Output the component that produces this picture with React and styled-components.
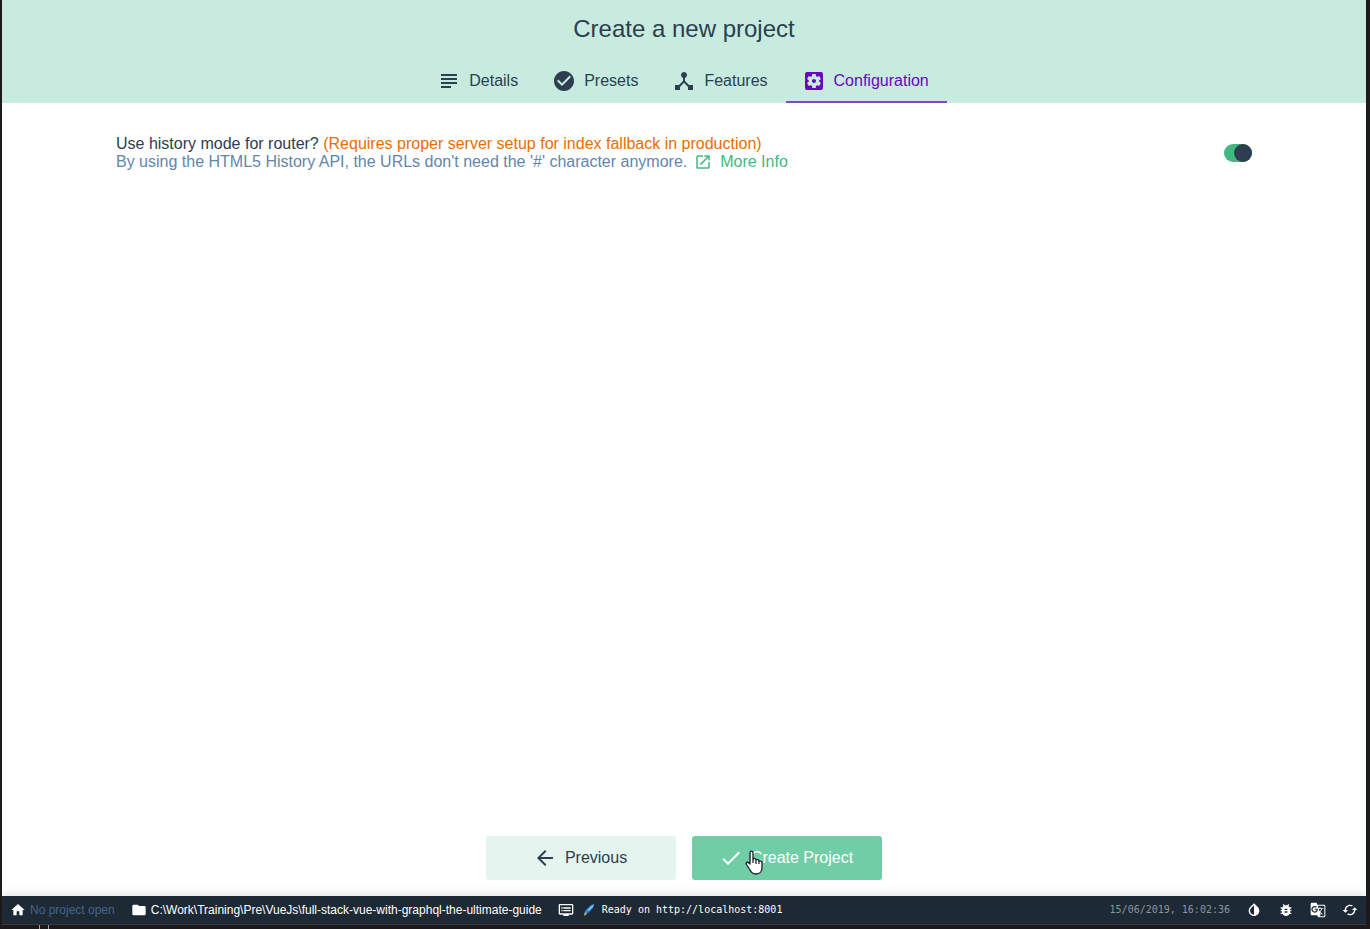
import React from "react";
import styled, { createGlobalStyle } from "styled-components";
import {
  MdSubject, MdCheckCircle, MdDeviceHub, MdSettingsApplications, MdOpenInNew,
  MdArrowBack, MdCheck, MdHome, MdFolder, MdDvr, MdInvertColors, MdBugReport,
  MdGTranslate, MdCached,
} from "react-icons/md";

const Global = createGlobalStyle`
  * { box-sizing: border-box; }
  html, body, #root { height: 100%; }
  body {
    margin: 0;
    background: #1c1a1b;
    color: #2c3e50;
    font: 16px/18px "Liberation Sans", Arial, sans-serif;
  }
  button { font: inherit; border: 0; margin: 0; cursor: pointer; }
`;

const Desktop = styled.div`
  height: 100%;
  display: flex;
  flex-direction: column;
  padding: 0 4px 0 2px;
`;

const Window = styled.div`
  flex: 1;
  min-height: 0;
  display: flex;
  flex-direction: column;
  background: #fff;
`;

const Header = styled.header`
  background: #c7ebde;
  text-align: center;
`;

const Title = styled.h1`
  margin: 0;
  padding-top: 15px;
  font-size: 24px;
  line-height: 28px;
  font-weight: 400;
`;

const Tabs = styled.nav`
  display: flex;
  justify-content: center;
  padding-top: 16px;
`;

const Tab = styled.button`
  display: flex;
  align-items: center;
  gap: 8px;
  height: 44px;
  padding: 2px 18px 0 16px;
  background: none;
  border-bottom: 2px solid ${(p) => (p.$active ? "#8049c4" : "transparent")};
  color: ${(p) => (p.$active ? "#6806c1" : "#2c3e50")};
  svg { width: 24px; height: 24px; }
`;

const Content = styled.main`
  flex: 1;
  padding: 32px 114px;
`;

const Prompt = styled.div`
  display: flex;
  align-items: center;
  justify-content: space-between;
`;

const PromptText = styled.label`
  display: block;
`;

const Warning = styled.span`
  color: #ea6e00;
`;

const Description = styled.div`
  display: flex;
  align-items: center;
  color: #6286ad;
`;

const MoreLink = styled.a`
  display: inline-flex;
  align-items: center;
  gap: 8px;
  margin-left: 7px;
  color: #42b983;
  text-decoration: none;
  svg { width: 18px; height: 18px; }
`;

const Switch = styled.input`
  appearance: none;
  width: 28px;
  height: 18px;
  margin: 0;
  border-radius: 9px;
  background: #42b983;
  display: flex;
  justify-content: flex-end;
  cursor: pointer;
  &::before {
    content: "";
    width: 18px;
    height: 18px;
    border-radius: 50%;
    background: #2c3e50;
  }
  &:not(:checked) { justify-content: flex-start; background: #b9c6d2; }
`;

const Actions = styled.div`
  display: flex;
  justify-content: center;
  gap: 16px;
  padding: 16px;
`;

const Action = styled.button`
  position: relative;
  display: flex;
  align-items: center;
  justify-content: center;
  gap: 8px;
  width: 190px;
  height: 44px;
  padding: 0 8px 0 6px;
  border-radius: 3px;
  background: ${(p) => (p.$primary ? "#71cda5" : "#e3f5ee")};
  color: ${(p) => (p.$primary ? "#fff" : "#2c3e50")};
  svg { width: 24px; height: 24px; }
`;

const Pointer = styled.svg`
  && {
    position: absolute;
    left: 53px;
    top: 14px;
    width: 18px;
    height: 25px;
  }
`;

const StatusBar = styled.footer`
  display: flex;
  align-items: center;
  height: 28px;
  padding: 0 8px;
  background: #1d2935;
  color: #fff;
  font-size: 12px;
  line-height: 16px;
  box-shadow: 0 -2px 10px rgba(0, 0, 0, 0.12);
`;

const StatusItem = styled.div`
  display: flex;
  align-items: center;
  gap: 4px;
  margin-right: 16px;
  white-space: nowrap;
  color: ${(p) => (p.$muted ? "#44658b" : "#fff")};
  svg { width: 16px; height: 16px; color: #fff; }
`;

const Log = styled(StatusItem)`
  flex: 1;
  gap: 6px;
  font: 10px/16px "DejaVu Sans Mono", monospace;
`;

const Clock = styled.time`
  color: #8e9499;
  font: 10px/16px "DejaVu Sans Mono", monospace;
`;

const StatusButton = styled.button`
  display: flex;
  margin-left: 16px;
  padding: 0;
  background: none;
  color: #fff;
  svg { width: 16px; height: 16px; }
`;

const BottomEdge = styled.div`
  height: 5px;
  padding-left: 37px;
  border-top: 1px solid #3a3a3a;
  &::before {
    content: "";
    display: block;
    width: 8px;
    height: 4px;
    border: solid #a0a0a0;
    border-width: 0 1px;
  }
`;

const tabs = [
  ["Details", MdSubject],
  ["Presets", MdCheckCircle],
  ["Features", MdDeviceHub],
  ["Configuration", MdSettingsApplications],
];

const tools = [
  ["Toggle dark mode", MdInvertColors],
  ["Report a bug", MdBugReport],
  ["Translate", MdGTranslate],
  ["Reload", MdCached],
];

function Rocket() {
  return (
    <svg viewBox="0 0 16 16" aria-hidden="true">
      <path d="M4 13l1-4 5-5 4-2-1 4-5 5z" fill="#1f86d8" />
      <path d="M7 8l4-4 3-2-1 3-4 4z" fill="#6dbcf2" />
      <path d="M4 14l1-4 2 2z" fill="#d9a93a" />
    </svg>
  );
}

export default function App() {
  return (
    <Desktop>
      <Global />
      <Window>
        <Header>
          <Title>Create a new project</Title>
          <Tabs>
            {tabs.map(([name, Icon]) => (
              <Tab key={name} $active={name === "Configuration"}>
                <Icon />
                {name}
              </Tab>
            ))}
          </Tabs>
        </Header>
        <Content>
          <Prompt>
            <div>
              <PromptText htmlFor="history">
                Use history mode for router?{" "}
                <Warning>(Requires proper server setup for index fallback in production)</Warning>
              </PromptText>
              <Description>
                By using the HTML5 History API, the URLs don't need the '#' character anymore.
                <MoreLink href="#more">
                  <MdOpenInNew />
                  More Info
                </MoreLink>
              </Description>
            </div>
            <Switch id="history" type="checkbox" role="switch" defaultChecked />
          </Prompt>
        </Content>
        <Actions>
          <Action>
            <MdArrowBack />
            Previous
          </Action>
          <Action $primary>
            <MdCheck />
            Create Project
            <Pointer viewBox="0 0 18 25" aria-hidden="true">
              <path
                d="M5 3c0-2.500 3-2.500 3 0v6c1-1 3-.6 3 1 1-.8 3-.4 3 1 1.500-.6 3 .2 3 2v5c0 3-2 6-6 6-3 0-4.500-1-6-4l-3.500-5.500c-1-2 1-3 2.500-1.500l1 1z"
                fill="#fff"
                stroke="#1b1b2b"
                strokeWidth="1.300"
                strokeLinejoin="round"
              />
              <path d="M8 9v4M11 10v4M14 11v3" stroke="#1b1b2b" strokeWidth="1.200" />
            </Pointer>
          </Action>
        </Actions>
      </Window>
      <StatusBar>
        <StatusItem $muted>
          <MdHome />
          No project open
        </StatusItem>
        <StatusItem>
          <MdFolder />
          C:\Work\Training\Pre\VueJs\full-stack-vue-with-graphql-the-ultimate-guide
        </StatusItem>
        <Log>
          <MdDvr />
          <Rocket />
          Ready on http://localhost:8001
        </Log>
        <Clock>15/06/2019, 16:02:36</Clock>
        {tools.map(([label, Icon]) => (
          <StatusButton key={label} aria-label={label}>
            <Icon />
          </StatusButton>
        ))}
      </StatusBar>
      <BottomEdge />
    </Desktop>
  );
}
